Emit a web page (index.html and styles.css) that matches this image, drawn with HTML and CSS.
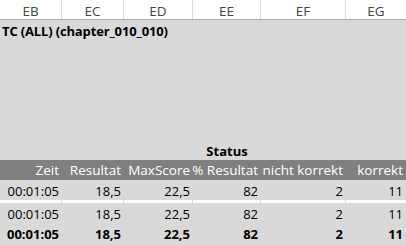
FILE: index.html
```html
<!DOCTYPE html>
<html lang="de">
<head>
<meta charset="utf-8">
<link rel="stylesheet" href="styles.css">
</head>
<body>
<div class="sheet">
  <div class="colheads">
    <div class="ch">EB</div><div class="ch">EC</div><div class="ch">ED</div><div class="ch">EE</div><div class="ch">EF</div><div class="ch last">EG</div>
  </div>
  <div class="area">
    <div class="title-row"><span class="title">TC (ALL) (chapter_010_010)</span></div>
    <div class="spacer"></div>
    <div class="grid status-row">
      <div></div><div></div><div></div><div class="status">Status</div><div></div><div></div>
    </div>
    <div class="grid head-row">
      <div class="c">Zeit</div><div class="c">Resultat</div><div class="c">MaxScore</div><div class="c">% Resultat</div><div class="c">nicht korrekt</div><div class="c">korrekt</div>
    </div>
    <div class="grid data-row">
      <div class="c">00:01:05</div><div class="c">18,5</div><div class="c">22,5</div><div class="c">82</div><div class="c">2</div><div class="c">11</div>
    </div>
    <div class="grid sep-row">
      <div></div><div></div><div></div><div></div><div></div><div></div>
    </div>
    <div class="grid data-row">
      <div class="c">00:01:05</div><div class="c">18,5</div><div class="c">22,5</div><div class="c">82</div><div class="c">2</div><div class="c">11</div>
    </div>
    <div class="grid data-row bold">
      <div class="c">00:01:05</div><div class="c">18,5</div><div class="c">22,5</div><div class="c">82</div><div class="c">2</div><div class="c">11</div>
    </div>
  </div>
</div>
</body>
</html>
```
FILE: styles.css
```css
html, body {
  margin: 0;
  padding: 0;
  background: #d9d9d9;
}
.sheet {
  width: 406px;
  height: 245px;
  overflow: hidden;
  font-family: "Open Sans", "Liberation Sans", sans-serif;
  font-size: 13px;
  color: #000;
}
.colheads {
  display: grid;
  grid-template-columns: 62px 62px 69px 68px 85px 60px;
  height: 20px;
  background: #fff;
  border-bottom: 1px solid #ababab;
  box-sizing: border-box;
}
.ch {
  border-right: 1px solid #dadada;
  display: flex;
  align-items: center;
  justify-content: center;
  color: #444;
  font-size: 13.5px;
  height: 19px;
  padding-top: 2px;
  box-sizing: border-box;
}
.ch.last { border-right: none; }
.area {
  background: #d9d9d9;
}
.title-row {
  height: 20px;
  display: flex;
  align-items: center;
  padding-left: 2px;
  padding-top: 2px;
  box-sizing: border-box;
}
.title {
  font-weight: bold;
  letter-spacing: -0.15px;
}
.spacer { height: 100px; }
.grid {
  display: grid;
  grid-template-columns: 62px 62px 69px 68px 85px 60px;
}
.status-row { height: 20px; }
.status {
  font-weight: bold;
  display: flex;
  align-items: center;
  justify-content: center;
  padding-top: 2px;
}
.head-row {
  height: 20px;
  background: #808080;
  color: #fff;
  font-size: 13.5px;
}
.c {
  display: flex;
  align-items: center;
  justify-content: flex-end;
  padding-right: 3px;
  white-space: nowrap;
  box-sizing: border-box;
}
.data-row .c { padding-top: 2px; }
.data-row { height: 20px; }
.sep-row { height: 3px; }
.sep-row div {
  background: #fff;
  border-right: 1px solid #d9d9d9;
}
.sep-row div:last-child { border-right: none; }
.bold { font-weight: bold; }
```
